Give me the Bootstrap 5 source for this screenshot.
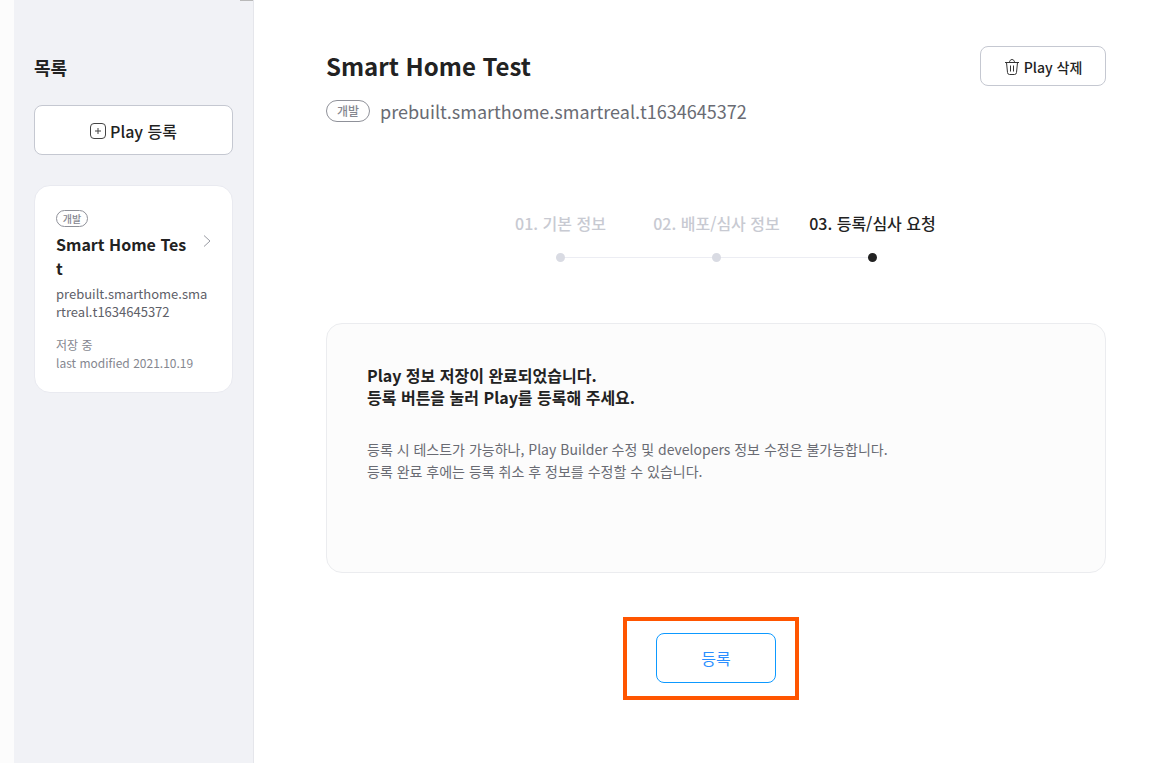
<!DOCTYPE html>
<html lang="ko">
<head>
<meta charset="utf-8">
<meta name="viewport" content="width=device-width, initial-scale=1">
<title>Smart Home Test</title>
<link href="https://cdn.jsdelivr.net/npm/bootstrap@5.3.0/dist/css/bootstrap.min.css" rel="stylesheet">
<style>
  body { font-family: "Noto Sans CJK KR", sans-serif; font-size: 16px; line-height: 24px; color: #222; background: #fff; }
  .gutter { width: 14px; background: #fcfcfc; }
  .sidebar { width: 240px; padding: 55px 20px 20px; background: #f1f2f6; border-right: 1px solid #e5e6eb; }
  .scroll-mark { top: 0; right: 0; width: 13px; height: 1px; background: #b9b9b9; }
  .side-title { font-size: 18px; line-height: 24px; font-weight: 700; margin-bottom: 26px; }
  .btn-line { --bs-btn-color: #222; --bs-btn-bg: #fff; --bs-btn-border-color: #c5c8d1; --bs-btn-hover-color: #222; --bs-btn-hover-bg: #f7f8fa; --bs-btn-hover-border-color: #a9adb8; --bs-btn-border-radius: 8px; font-weight: 500; padding: 2px 0 0; }
  .btn-add { height: 50px; font-size: 16px; margin-bottom: 30px; }
  .btn-del { width: 126px; height: 40px; font-size: 14px; }
  .play-item { padding: 24px 20px 20px 21px; background: #fff; border: 1px solid #e9eaf0; border-radius: 16px; color: #222; }
  .tag { border: 1px solid #8f9199; color: #85878f; border-radius: 11px; font-weight: 500; background: #fff; }
  .tag-sm { width: 32px; height: 17px; font-size: 10px; line-height: 15px; }
  .tag-md { width: 44px; height: 22px; font-size: 12px; line-height: 20px; }
  .item-head { margin-top: 5px; }
  .item-name { width: 136px; font-size: 16px; line-height: 24px; font-weight: 700; word-break: break-all; }
  .item-arrow { margin: 2px 1px 0 0; }
  .item-id { margin-top: 5px; font-size: 13px; line-height: 18px; color: #5e6068; word-break: break-all; }
  .item-meta { margin-top: 15px; font-size: 12px; line-height: 18px; color: #85878f; }
  .content-area { padding: 46px 64px 63px 72px; }
  .page-title { font-size: 24px; line-height: 40px; font-weight: 700; }
  .play-ref { margin-top: 11px; }
  .play-id { margin-left: 10px; font-size: 18px; line-height: 28px; color: #696b73; }
  .tag-row { height: 28px; }
  .steps { width: 468px; margin: 86px auto 61px; }
  .step-item { padding-left: 1px; font-weight: 500; color: #c8cad2; }
  .step-item + .step-item::before { content: ""; position: absolute; left: -50%; bottom: 4px; width: 100%; height: 1px; background: #ecedf3; }
  .step-dot { z-index: 1; width: 9px; height: 9px; margin-top: 18px; background: #d9dbe3; }
  .step-item.current { color: #222; }
  .step-item.current .step-dot { background: #222; }
  .notice { min-height: 250px; padding: 40px; background: #fcfcfc; border: 1px solid #ebecef; border-radius: 16px; line-height: 22px; }
  .notice-head { font-weight: 700; margin-bottom: 30px; }
  .notice-text { font-size: 14px; color: #696b73; }
  .btn-submit { --bs-btn-color: #2b8fff; --bs-btn-border-color: #0d99ff; --bs-btn-bg: #fff; --bs-btn-hover-color: #fff; --bs-btn-hover-bg: #0d99ff; --bs-btn-border-radius: 8px; width: 120px; height: 50px; font-size: 16px; }
  .submit-row { margin-top: 60px; }
  .callout { inset: -16px -23px -17px -33px; border: 4px solid #ff5500; pointer-events: none; }
</style>
</head>
<body>
<div class="d-flex min-vh-100">
  <div class="gutter flex-shrink-0"></div>
  <aside class="sidebar position-relative flex-shrink-0">
    <span class="scroll-mark position-absolute"></span>
    <h2 class="side-title">목록</h2>
    <button type="button" class="btn btn-line btn-add w-100 d-flex align-items-center justify-content-center gap-1">
      <svg width="16" height="16" viewBox="0 0 16 16" fill="none" stroke="#444" aria-hidden="true"><rect x=".5" y=".5" width="15" height="15" rx="3.5"/><path d="M8 5v6M5 8h6"/></svg>
      <span>Play 등록</span>
    </button>
    <a href="#" class="play-item d-block text-decoration-none">
      <span class="tag tag-sm d-block text-center">개발</span>
      <span class="item-head d-flex justify-content-between align-items-start">
        <strong class="item-name">Smart Home Test</strong>
        <svg class="item-arrow" width="8" height="14" viewBox="0 0 8 14" fill="none" stroke="#999ba3" aria-hidden="true"><path d="M1 1.500l6 5.500-6 5.500"/></svg>
      </span>
      <span class="item-id d-block">prebuilt.smarthome.smartreal.t1634645372</span>
      <span class="item-meta d-block">저장 중<br>last modified 2021.10.19</span>
    </a>
  </aside>

  <main class="content-area flex-grow-1">
    <header>
      <div class="d-flex justify-content-between align-items-start">
        <h1 class="page-title mb-0">Smart Home Test</h1>
        <button type="button" class="btn btn-line btn-del d-flex align-items-center justify-content-center gap-1">
          <svg width="16" height="18" viewBox="0 0 16 18" fill="none" stroke="#333" aria-hidden="true"><path d="M1 4.500h14M5.500 4.500c0-4 5-4 5 0M2.500 4.500l1 10q.2 2 2 2h5q1.800 0 2-2l1-10M6.500 7.500v6M9.500 7.500v6"/></svg>
          <span>Play 삭제</span>
        </button>
      </div>
      <div class="play-ref d-flex align-items-center">
        <span class="tag tag-md text-center">개발</span>
        <span class="play-id">prebuilt.smarthome.smartreal.t1634645372</span>
      </div>
    </header>

    <ol class="steps list-unstyled row row-cols-3 gx-0">
      <li class="step-item position-relative d-flex flex-column align-items-center text-nowrap">01. 기본 정보<span class="step-dot rounded-circle position-relative"></span></li>
      <li class="step-item position-relative d-flex flex-column align-items-center text-nowrap">02. 배포/심사 정보<span class="step-dot rounded-circle position-relative"></span></li>
      <li class="step-item current position-relative d-flex flex-column align-items-center text-nowrap" aria-current="step">03. 등록/심사 요청<span class="step-dot rounded-circle position-relative"></span></li>
    </ol>

    <section class="notice">
      <p class="notice-head">Play 정보 저장이 완료되었습니다.<br>등록 버튼을 눌러 Play를 등록해 주세요.</p>
      <p class="notice-text mb-0">등록 시 테스트가 가능하나, Play Builder 수정 및 developers 정보 수정은 불가능합니다.<br>등록 완료 후에는 등록 취소 후 정보를 수정할 수 있습니다.</p>
    </section>

    <div class="submit-row d-flex justify-content-center">
      <div class="position-relative">
        <button type="button" class="btn btn-submit p-0">등록</button>
        <span class="callout position-absolute"></span>
      </div>
    </div>
  </main>
</div>
<script src="https://cdn.jsdelivr.net/npm/bootstrap@5.3.0/dist/js/bootstrap.bundle.min.js"></script>
</body>
</html>
